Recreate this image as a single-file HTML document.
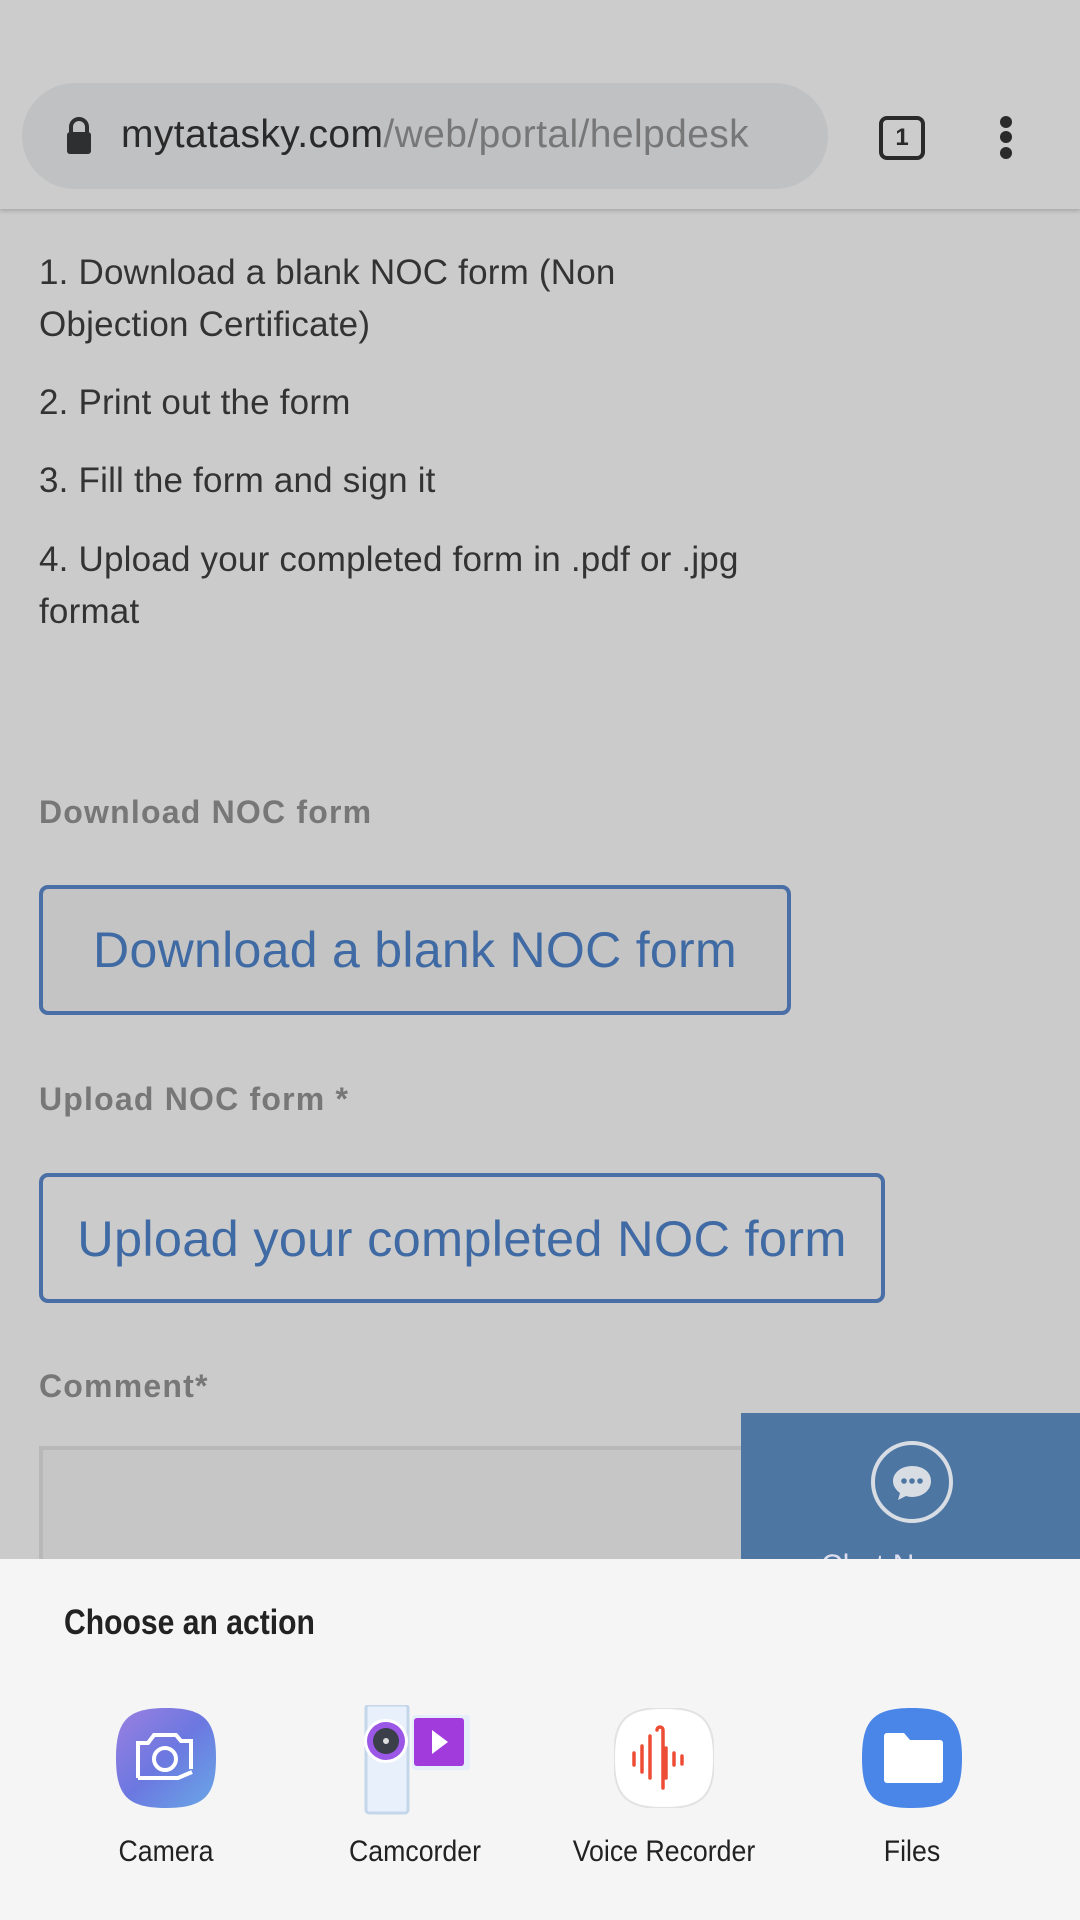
<!DOCTYPE html>
<html><head><meta charset="utf-8"><style>
*{margin:0;padding:0;box-sizing:border-box}
body{width:1080px;height:1920px;background:#cbcbcb;position:relative;overflow:hidden;font-family:"Liberation Sans",sans-serif}
.abs{position:absolute}
.top{left:0;top:0;width:1080px;height:209px;background:#cccccc;box-shadow:0 2px 4px rgba(0,0,0,.18);z-index:5}
.pill{left:22px;top:83px;width:806px;height:106px;border-radius:53px;background:#c0c1c3}
.url{left:121px;top:113px;font-size:39px;color:#2a2a2a;letter-spacing:0.4px}
.url span{color:#777}
.li{left:39px;font-size:35px;color:#333;line-height:52px;letter-spacing:0.2px}
.lab{left:39px;font-size:32px;color:#777;font-weight:bold;letter-spacing:1.2px}
.btn{border:4px solid #4a6fa6;border-radius:9px;color:#3f6aa4;font-size:50px;display:flex;align-items:center;justify-content:center;letter-spacing:0.3px}
.sheet{left:0;top:1559px;width:1080px;height:361px;background:#f5f5f5;z-index:6}
.ico{top:1708px;width:100px;height:100px}
.lbl{top:1835px;width:240px;text-align:center;font-size:30px;color:#222;transform:scaleX(0.89)}
</style></head><body>
<div class="abs li" style="top:160px">Customers, please follow the steps below:</div>
<div class="abs top">
 <div class="abs pill"></div>
 <svg class="abs" style="left:64px;top:116px" width="30" height="40" viewBox="0 0 30 40"><path d="M7 16V11a8 8 0 0 1 16 0v5" fill="none" stroke="#2d2f31" stroke-width="4"/><rect x="3" y="16" width="24" height="22" rx="3" fill="#2d2f31"/></svg>
 <div class="abs url">mytatasky.com<span>/web/portal/helpdesk</span></div>
 <div class="abs" style="left:879px;top:116px;width:46px;height:44px;border:4px solid #2a2a2a;border-radius:8px;font-size:24px;font-weight:bold;text-align:center;line-height:36px;color:#2a2a2a">1</div>
 <div class="abs" style="left:1000px;top:116px;width:12px;height:12px;border-radius:6px;background:#2a2a2a"></div>
 <div class="abs" style="left:1000px;top:131px;width:12px;height:12px;border-radius:6px;background:#2a2a2a"></div>
 <div class="abs" style="left:1000px;top:147px;width:12px;height:12px;border-radius:6px;background:#2a2a2a"></div>
</div>
<div class="abs li" style="top:247px">1. Download a blank NOC form (Non<br>Objection Certificate)</div>
<div class="abs li" style="top:377px">2. Print out the form</div>
<div class="abs li" style="top:455px">3. Fill the form and sign it</div>
<div class="abs li" style="top:534px">4. Upload your completed form in .pdf or .jpg<br>format</div>
<div class="abs lab" style="top:794px">Download NOC form</div>
<div class="abs btn" style="left:39px;top:885px;width:752px;height:130px;background:#c4c4c4">Download a blank NOC form</div>
<div class="abs lab" style="top:1081px">Upload NOC form *</div>
<div class="abs btn" style="left:39px;top:1173px;width:846px;height:130px;font-size:50.5px">Upload your completed NOC form</div>
<div class="abs lab" style="top:1368px">Comment*</div>
<div class="abs" style="left:39px;top:1446px;width:760px;height:200px;border:4px solid #b8b8b8;background:#c6c6c6"></div>
<div class="abs" style="left:741px;top:1413px;width:339px;height:200px;background:#4d76a3">
 <svg class="abs" style="left:128px;top:26px" width="86" height="86" viewBox="0 0 86 86"><circle cx="43" cy="43" r="39" fill="none" stroke="#d8dde4" stroke-width="4"/><path d="M43 27c-11 0-19 7-19 15 0 5 3 9 7 12l-2 7 8-4c2 .5 4 1 6 1 11 0 19-7 19-16s-8-15-19-15z" fill="#d8dde4"/><circle cx="35" cy="42" r="2.8" fill="#4d76a3"/><circle cx="43" cy="42" r="2.8" fill="#4d76a3"/><circle cx="51" cy="42" r="2.8" fill="#4d76a3"/></svg>
 <div class="abs" style="left:80px;top:136px;font-size:30px;color:#dde">Chat Now</div>
</div>
<div class="abs sheet">
 <div class="abs" style="left:64px;top:44px;font-size:35px;font-weight:bold;color:#222;transform:scaleX(0.86);transform-origin:left">Choose an action</div>
</div>
<svg class="abs ico" style="left:116px;z-index:7" viewBox="0 0 100 100"><defs><linearGradient id="g1" x1="0" y1="0" x2="1" y2="1"><stop offset="0" stop-color="#9b7fe0"/><stop offset=".5" stop-color="#6b78e0"/><stop offset="1" stop-color="#6aa8e6"/></linearGradient></defs><path d="M50 0C88 0 100 12 100 50S88 100 50 100 0 88 0 50 12 0 50 0z" fill="url(#g1)"/><path d="M22 70V35h10l6-8h22l5 6h10v28M22 70h40l14-6" fill="none" stroke="#fff" stroke-width="4"/><circle cx="49" cy="51" r="11" fill="none" stroke="#fff" stroke-width="4"/></svg>
<svg class="abs ico" style="left:362px;top:1705px;width:110px;height:110px;z-index:7" viewBox="0 0 110 110"><rect x="4" y="0" width="42" height="108" rx="3" fill="#e8f1fb" stroke="#c3d6ea" stroke-width="3"/><rect x="50" y="10" width="58" height="55" rx="3" fill="#e6eefa"/><rect x="52" y="13" width="50" height="48" rx="3" fill="#a23bdc"/><path d="M70 25l16 12-16 12z" fill="#fff"/><circle cx="24" cy="36" r="22" fill="#fff"/><circle cx="24" cy="36" r="19" fill="#9b57e6"/><circle cx="24" cy="36" r="13" fill="#3a3f4a"/><circle cx="24" cy="36" r="3" fill="#ddd"/></svg>
<svg class="abs ico" style="left:614px;z-index:7" viewBox="0 0 100 100"><path d="M50 0C88 0 100 12 100 50S88 100 50 100 0 88 0 50 12 0 50 0z" fill="#fff" stroke="#e2e2e2" stroke-width="2"/><path d="M20 45v12M28 38v26M36 28v42M43 22a3 3 0 0 1 6 0v58M52 40v30M60 45v12M68 48v8" stroke="#ee4d35" stroke-width="3.5" fill="none" stroke-linecap="round"/></svg>
<svg class="abs ico" style="left:862px;z-index:7" viewBox="0 0 100 100"><path d="M50 0C88 0 100 12 100 50S88 100 50 100 0 88 0 50 12 0 50 0z" fill="#4a86e8"/><path d="M22 28a3 3 0 0 1 3-3h17l6 7h30a3 3 0 0 1 3 3v37a3 3 0 0 1-3 3H25a3 3 0 0 1-3-3z" fill="#fff"/></svg>
<div class="abs lbl" style="left:46px;z-index:7">Camera</div>
<div class="abs lbl" style="left:295px;z-index:7">Camcorder</div>
<div class="abs lbl" style="left:544px;z-index:7">Voice Recorder</div>
<div class="abs lbl" style="left:792px;z-index:7">Files</div>
</body></html>
